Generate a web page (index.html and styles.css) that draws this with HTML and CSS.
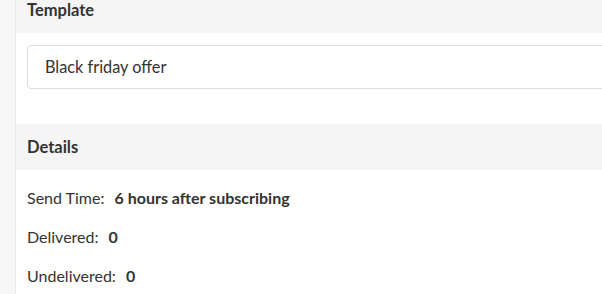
FILE: index.html
```html
<!DOCTYPE html>
<html lang="en">
<head>
  <meta charset="UTF-8" />
  <meta name="viewport" content="width=device-width, initial-scale=1.0"/>
  <title>Sequence step</title>
  <link rel="stylesheet" href="styles.css">
</head>
<body>
  <div class="panel">
    <div class="section">
      <div class="section-head first">Template</div>
      <div class="section-body">
        <div class="select">Black friday offer</div>
      </div>
    </div>

    <div class="section">
      <div class="section-head">Details</div>
      <div class="section-body details">
        <p class="row">Send Time: <strong>6 hours after subscribing</strong></p>
        <p class="row">Delivered: <strong>0</strong></p>
        <p class="row">Undelivered: <strong>0</strong></p>
      </div>
    </div>
  </div>
</body>
</html>
```

FILE: styles.css
```css
html, body {
  margin: 0;
  height: 100%;
}
body {
  font-family: Lato, "Open Sans", sans-serif;
  font-size: 16px;
  color: #333;
  background-color: #f6f6f6;
  padding-left: 15px;
  overflow: hidden;
}
.panel {
  width: 700px;
  min-height: 100%;
  background: white;
  border-left: 1px solid #ececec;
}
.section-head {
  height: 46px;
  line-height: 46px;
  padding: 0 11px;
  background: #f5f5f5;
  font-weight: bold;
  font-size: 16.5px;
}
.section-head.first {
  height: 33px;
  line-height: 20px;
}
.section-body {
  padding: 12px 11px 35px;
}
.select {
  height: 42px;
  line-height: 42px;
  padding: 0 17px;
  border: 1px solid #ddd;
  border-radius: 4px;
  font-size: 16.3px;
}
.details {
  padding-top: 18px;
}
.row {
  margin: 0 0 19px;
  line-height: 20px;
}
.row strong {
  margin-left: 6px;
}
```
